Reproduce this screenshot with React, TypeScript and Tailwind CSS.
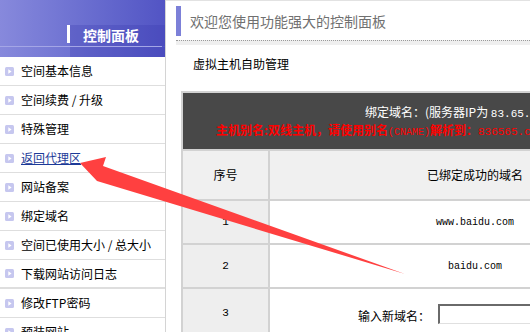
import React from "react";

const items = [
  { t: "空间基本信息" },
  { t: "空间续费 / 升级" },
  { t: "特殊管理" },
  { t: "返回代理区", link: true },
  { t: "网站备案" },
  { t: "绑定域名" },
  { t: "空间已使用大小 / 总大小" },
  { t: "下载网站访问日志", thick: true },
  { t: "修改FTP密码" },
  { t: "预装网站" },
];

function Icon() {
  return (
    <svg width="9" height="9" viewBox="0 0 9 9" className="shrink-0">
      <rect x="0" y="0" width="9" height="9" rx="1.5" fill="#c6c7ef" />
      <polygon points="3.3,2.2 6.6,4.5 3.3,6.8" fill="#ffffff" />
    </svg>
  );
}

export default function App() {
  const cjk = { fontFamily: '"Noto Sans CJK SC", "Noto Sans", sans-serif' };
  const mono = { fontFamily: '"Liberation Mono", monospace' };
  return (
    <div
      className="relative w-[530px] h-[332px] overflow-hidden bg-white flex items-start text-[12px] text-black"
      style={cjk}
    >
      {/* Sidebar */}
      <div className="w-[166px] shrink-0 h-[332px] border-r border-[#d4d4d4] flex flex-col">
        <div className="h-[57px] bg-gradient-to-r from-[#8789dc] to-[#5254c4] flex flex-col">
          <div className="h-[25px]" />
          <div className="h-[21px] flex">
            <div className="w-[67px]" />
            <div className="w-[3px] h-[18px] bg-white" />
            <div className="flex-1 bg-[rgba(50,50,170,0.25)] pl-[13px] text-[14px] font-bold text-white leading-[20px]">
              控制面板
            </div>
          </div>
          <div className="h-px bg-[#a4a6e6] mr-[3px]" />
          <div className="h-[10px] flex">
            <div className="w-[70px]" />
            <div className="flex-1 bg-[rgba(50,50,170,0.25)]" />
          </div>
        </div>
        {items.map((it, i) => (
          <div
            key={i}
            className={
              "h-[29px] shrink-0 flex items-center pl-[5px] gap-[7px] border-[#dedede] " +
              (it.thick ? "border-b-2" : "border-b")
            }
          >
            <Icon />
            <span
              className={
                "leading-[16px] whitespace-nowrap " +
                (it.link ? "text-[#1c3a98] underline" : "text-black")
              }
            >
              {it.t}
            </span>
          </div>
        ))}
      </div>

      {/* Main */}
      <div className="flex-1 min-w-0 border-t border-[#e2e2e2] pl-[10px] flex flex-col">
        <div className="mt-[5px] h-[30px] flex items-center">
          <div className="w-[5px] h-full bg-[#7c80d8]" />
          <div className="ml-[9px] text-[14px] text-[#707070] leading-[18px] whitespace-nowrap">
            欢迎您使用功能强大的控制面板
          </div>
        </div>
        <div className="mt-[4px] h-[5px] border-t border-dotted border-[#9a9a9a] bg-[#efefef]" />
        <div className="mt-[10px] pl-[17px] leading-[18px] whitespace-nowrap">虚拟主机自助管理</div>

        <div className="mt-[18px] ml-[5px] w-[501px] shrink-0 border-2 border-[#d2d2d2] bg-[#d2d2d2] flex flex-col gap-[2px]">
          <div className="h-[56px] bg-[#484848] pt-[11px] whitespace-nowrap">
            <div className="pl-[182px] text-white leading-[16px]">
              绑定域名：(服务器IP为 <span style={mono} className="text-[11px]">83.65.12.120</span>)
            </div>
            <div className="pl-[33px] text-[#ff0000] leading-[16px] font-bold">
              主机别名:双线主机，请使用别名<span style={mono} className="text-[10px] font-normal">(CNAME)</span>解析到：<span style={mono} className="text-[11px] font-normal">836565.cname.com</span>
            </div>
          </div>
          <div className="grid grid-cols-[85px_1fr] gap-[2px]">
            <div className="h-[48px] bg-[#f0f0f0] flex items-center justify-center">序号</div>
            <div className="h-[48px] bg-[#f0f0f0] flex items-center justify-center">已绑定成功的域名</div>

            <div className="h-[42px] bg-[#eeeeee] flex items-center justify-center" style={mono}>
              <span className="text-[11px]">1</span>
            </div>
            <div className="h-[42px] bg-white flex items-center justify-center" style={mono}>
              <span className="text-[10px]">www.baidu.com</span>
            </div>

            <div className="h-[42px] bg-[#eeeeee] flex items-center justify-center" style={mono}>
              <span className="text-[11px]">2</span>
            </div>
            <div className="h-[42px] bg-white flex items-center justify-center" style={mono}>
              <span className="text-[10px]">baidu.com</span>
            </div>

            <div className="h-[48px] bg-[#eeeeee] flex items-center justify-center" style={mono}>
              <span className="text-[11px]">3</span>
            </div>
            <div className="h-[48px] bg-white pt-[15px] pl-[88px] flex items-start gap-[8px]">
              <span className="mt-[4px] leading-[16px] whitespace-nowrap">输入新域名：</span>
              <div className="w-[150px] h-[20px] border-t-2 border-l-2 border-b border-r border-t-[#6a6a6a] border-l-[#6a6a6a] border-b-[#e0e0e0] border-r-[#e0e0e0] bg-white" />
            </div>
          </div>
        </div>
      </div>

      {/* Annotation arrow */}
      <svg className="absolute inset-0 pointer-events-none" width="530" height="332" viewBox="0 0 530 332">
        <polygon
          points="80,163 106,157 103,166 405,274 97,181"
          fill="#ff4040"
        />
      </svg>
    </div>
  );
}
